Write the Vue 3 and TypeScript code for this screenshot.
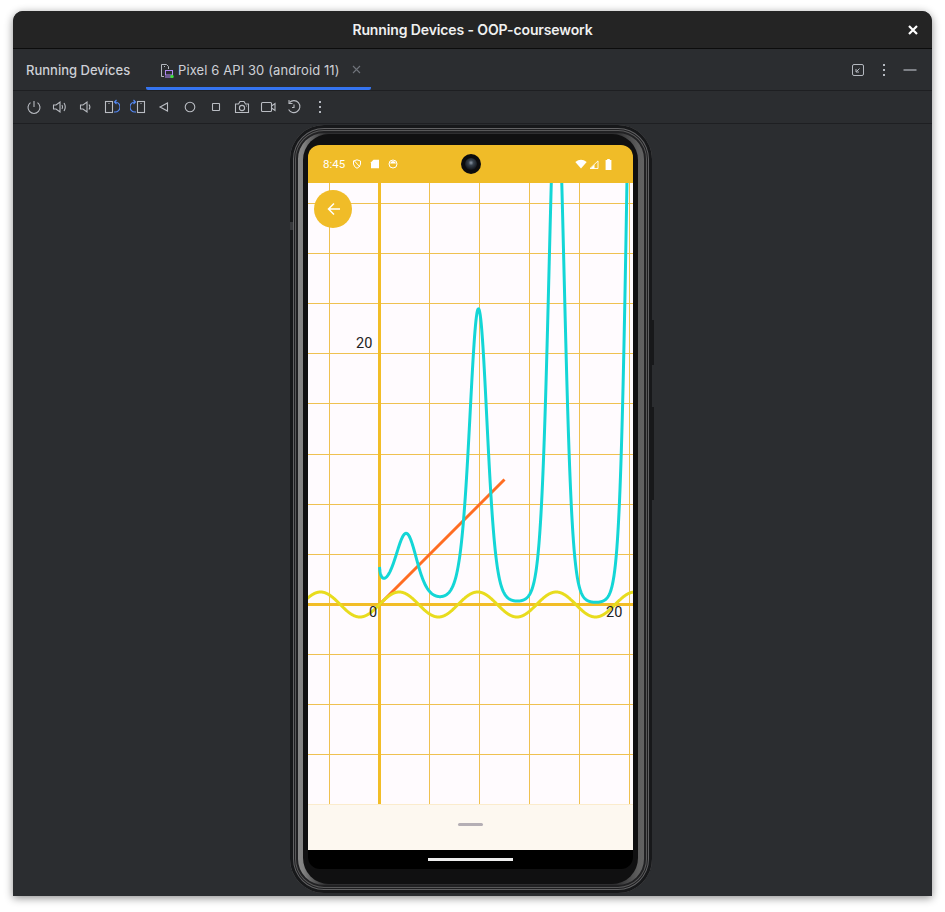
<script setup lang="ts">
const unit = 12.5
const ox = 71.5
const oy = 421.5
const W = 325
const H = 622

function path(f: (x: number) => number, from: number, to: number): string {
  const pts: string[] = []
  for (let x = from; x <= to; x += 0.02) {
    const y = Math.max(-400, oy - f(x) * unit)
    pts.push(`${(ox + x * unit).toFixed(2)},${y.toFixed(2)}`)
  }
  return 'M' + pts.join('L')
}

const cyan = path((x) => (x <= 0 ? 3 : 3 * Math.pow(x, Math.sin(x))), 0, 20.5)
const yellow = path((x) => Math.sin(x), -6, 21)
const orange = path((x) => x, 0, 10)

const vLines = [-1, 1, 2, 3, 4, 5].map((k) => ox + k * 50)
const hLines = [20, 70, 120, 170, 220, 271, 321, 371, 471, 521, 571].map((row) => row + 0.5)
</script>

<template>
  <div class="page">
    <div class="window">
      <header class="titlebar">
        <span class="title">Running Devices - OOP-coursework</span>
        <svg class="close" width="10" height="10" viewBox="0 0 10 10">
          <path d="M1 1L9 9M9 1L1 9" stroke="#fff" stroke-width="2.2" />
        </svg>
      </header>

      <div class="tabbar">
        <span class="tool-title">Running Devices</span>
        <div class="tab">
          <svg width="16" height="16" viewBox="0 0 16 16" fill="none">
            <path d="M5 14.5H2.5V2.5H7.5L9.5 4.5V7" stroke="#b4b8bf" />
            <path d="M5 4.5H6" stroke="#b4b8bf" />
            <rect x="6.5" y="8.5" width="7" height="4.5" stroke="#b189f5" />
            <path d="M6 15H12" stroke="#b189f5" />
            <circle cx="13" cy="14.5" r="1.7" fill="#3fdc3f" />
          </svg>
          <span class="tab-label">Pixel 6 API 30 (android 11)</span>
          <svg class="tab-x" width="9" height="9" viewBox="0 0 9 9">
            <path d="M1 1L8 8M8 1L1 8" stroke="#6f737a" stroke-width="1.1" />
          </svg>
        </div>
        <div class="tab-actions">
          <svg width="16" height="16" viewBox="0 0 16 16" fill="none">
            <rect x="2.5" y="2.5" width="11" height="11" rx="1.5" stroke="#b4b8bf" />
            <path d="M9.5 6.5L6 10M6 7V10H9" stroke="#b4b8bf" />
          </svg>
          <svg width="16" height="16" viewBox="0 0 16 16" fill="#b4b8bf">
            <rect x="7" y="2" width="2" height="2" />
            <rect x="7" y="7" width="2" height="2" />
            <rect x="7" y="12" width="2" height="2" />
          </svg>
          <svg width="16" height="16" viewBox="0 0 16 16">
            <path d="M1.5 8H14.5" stroke="#9a9da3" stroke-width="1.4" />
          </svg>
        </div>
      </div>

      <div class="toolbar">
        <svg class="ti" viewBox="0 0 16 16"><path d="M8 2V8" /><path d="M4.5 3.6A6 6 0 1 0 11.5 3.6" /></svg>
        <svg class="ti" viewBox="0 0 16 16"><path d="M1.5 6H4L8 3V13L4 10H1.5Z" /><path d="M10 6Q11.2 8 10 10M12 4Q14.5 8 12 12" /></svg>
        <svg class="ti" viewBox="0 0 16 16"><path d="M2.5 6H5L9 3V13L5 10H2.5Z" /><path d="M11 5.5Q12.8 8 11 10.5" /></svg>
        <svg class="ti" viewBox="0 0 16 16"><rect x="1.5" y="2.5" width="7" height="11" /><path d="M4.5 4.5H5.5" /><path class="blue" d="M10 3H11A5 5 0 0 1 11 13H10M12.5 1L10.5 3L12.5 5" /></svg>
        <svg class="ti" viewBox="0 0 16 16"><rect x="7.5" y="2.5" width="7" height="11" /><path d="M10.5 4.5H11.5" /><path class="blue" d="M6 3H5A5 5 0 0 0 5 13H6M3.5 1L5.5 3L3.5 5" /></svg>
        <svg class="ti" viewBox="0 0 16 16"><path d="M4 8L11.5 4V12Z" /></svg>
        <svg class="ti" viewBox="0 0 16 16"><circle cx="8" cy="8" r="4.8" /></svg>
        <svg class="ti" viewBox="0 0 16 16"><rect x="4.5" y="4.5" width="7" height="7" rx=".5" /></svg>
        <svg class="ti" viewBox="0 0 16 16"><path d="M1.5 13.5V5H4.5L6 2.5H10L11.5 5H14.5V13.5Z" /><circle cx="8" cy="9" r="2.6" /><path d="M12 7H12.8" /></svg>
        <svg class="ti" viewBox="0 0 16 16"><rect x="1.5" y="3.5" width="10" height="9" rx="1" /><path d="M11.5 7L15 4.5V11.5L11.5 9" /></svg>
        <svg class="ti" viewBox="0 0 16 16"><path d="M3.5 3.5A6 6 0 1 1 2.6 10.5" /><path d="M3 1V4.5H6.5" /><path d="M8 5.5V8.5H6" /></svg>
        <svg class="ti dots" viewBox="0 0 16 16"><rect x="7" y="2" width="2" height="2" /><rect x="7" y="7" width="2" height="2" /><rect x="7" y="12" width="2" height="2" /></svg>
      </div>

      <main class="stage">
        <div class="device">
          <span class="side side-a"></span>
          <span class="side side-b"></span>
          <span class="side side-c"></span>
          <div class="device-body">
            <div class="screen">
              <div class="statusbar">
                <div class="status-left">
                  <span class="clock">8:45</span>
                  <svg width="10" height="10" viewBox="0 0 10 10" fill="none"><path d="M1.5 2L5 .8L8.5 2V5Q8 8 5 9.3Q2 8 1.5 5Z" stroke="#fff" /><path d="M2 1.5L8 8" stroke="#fff" /></svg>
                  <svg width="10" height="10" viewBox="0 0 10 10"><path d="M3.5 .8H9V9.2H1V3.3Z" fill="#fff" /></svg>
                  <svg width="10" height="10" viewBox="0 0 10 10" fill="none"><circle cx="5" cy="5" r="4" stroke="#fff" /><path d="M2 4.5Q2.5 2 5 2Q7.5 2 8 4.5Z" fill="#fff" /></svg>
                </div>
                <div class="camera"><span class="lens"></span></div>
                <div class="status-right">
                  <svg width="12" height="10" viewBox="0 0 12 10"><path d="M.3 3Q6 -1.5 11.7 3L6 9.5Z" fill="#fff" /></svg>
                  <svg width="10" height="9" viewBox="0 0 10 9" fill="none"><path d="M9 .9V8.5H1Z" stroke="#fff" stroke-width=".9" /><path d="M5.5 4.5V8.5H1.5Z" fill="#fff" /></svg>
                  <svg width="7" height="11" viewBox="0 0 7 11"><path d="M2.2 0H4.8V1H6.4V11H.6V1H2.2Z" fill="#fff" /></svg>
                </div>
              </div>

              <div class="plot">
                <svg class="chart" :width="W" :height="H" :viewBox="`0 0 ${W} ${H}`">
                  <line v-for="x in vLines" :key="'v' + x" :x1="x" :x2="x" y1="0" :y2="H" class="grid" />
                  <line v-for="y in hLines" :key="'h' + y" x1="0" :x2="W" :y1="y" :y2="y" class="grid" />
                  <line :x1="ox" :x2="ox" y1="0" :y2="H" class="axis" />
                  <line x1="0" :x2="W" :y1="oy" :y2="oy" class="axis" />
                  <path :d="orange" class="curve orange" />
                  <path :d="cyan" class="curve cyan" />
                  <path :d="yellow" class="curve yellow" />
                  <text x="48" y="165" class="lbl">20</text>
                  <text x="61" y="434" class="lbl">0</text>
                  <text x="298" y="434" class="lbl">20</text>
                </svg>
                <button class="fab" type="button">
                  <svg width="16" height="16" viewBox="-1 0 16 16" fill="none"><path d="M14 8H2.5M8 2.5L2.5 8L8 13.5" stroke="#fff" stroke-width="1.5" /></svg>
                </button>
              </div>

              <div class="sheet"><span class="handle"></span></div>
              <div class="navbar"><span class="home"></span></div>
            </div>
          </div>
        </div>
      </main>
    </div>
  </div>
</template>

<style>
html, body { margin: 0; background: #fff; }
</style>

<style scoped>
.page {
  width: 945px;
  height: 912px;
  padding: 11px 13px 16px;
  box-sizing: border-box;
  background: #fff;
  overflow: hidden;
  font-family: Inter, "Liberation Sans", sans-serif;
}
.window {
  height: 885px;
  display: flex;
  flex-direction: column;
  border-radius: 10px 10px 0 0;
  overflow: hidden;
  background: #2b2d30;
  box-shadow: 0 2px 9px rgba(0, 0, 0, .45);
}
.titlebar {
  height: 37px;
  flex: none;
  display: flex;
  align-items: center;
  justify-content: center;
  position: relative;
  background: #242424;
  border-bottom: 1px solid #0c0c0c;
}
.title {
  color: #f0f0f0;
  font-size: 14px;
  font-weight: 600;
  letter-spacing: -.12px;
}
.close { position: absolute; right: 14px; top: 14px; }
.tabbar {
  height: 41px;
  flex: none;
  display: flex;
  align-items: stretch;
  padding: 0 14px 0 13px;
  border-bottom: 1px solid #1e1f22;
}
.tool-title {
  align-self: center;
  color: #ced0d6;
  font-size: 13px;
  font-weight: 500;
  width: 118px;
  white-space: nowrap;
}
.tab {
  width: 225px;
  box-sizing: border-box;
  display: flex;
  align-items: center;
  padding-left: 13px;
  gap: 3px;
  margin-left: 2px;
  border-bottom: 3px solid #3574f0;
  border-radius: 0 0 2px 2px;
  padding-top: 3px;
}
.tab-label {
  color: #ced0d6;
  font-size: 13px;
  letter-spacing: .1px;
  white-space: nowrap;
  width: 163px;
}
.tab-x { margin-left: 8px; }
.tab-actions {
  margin-left: auto;
  display: flex;
  align-items: center;
  gap: 10px;
}
.toolbar {
  height: 32px;
  flex: none;
  display: flex;
  align-items: center;
  gap: 10px;
  padding-left: 13px;
  border-bottom: 1px solid #1e1f22;
}
.ti {
  width: 16px;
  height: 16px;
  flex: none;
  fill: none;
  stroke: #b9bcc2;
  stroke-width: 1.1;
}
.ti .blue { stroke: #548af7; }
.dots { fill: #b4b8bf; stroke: none; }
.stage {
  flex: 1;
  display: flex;
  justify-content: flex-start;
  align-items: flex-start;
  padding: 1px 0 0 277px;
  min-height: 0;
}
.device {
  width: 362px;
  height: 768px;
  flex: none;
  position: relative;
  box-sizing: border-box;
  padding: 9px 14px 9px 13px;
  border-radius: 34px;
  background: linear-gradient(90deg, #8e8e8e 0, #828282 13px, #2e2e30 36px, #2e2e30 calc(100% - 36px), #5e5e5e calc(100% - 14px), #686868 100%);
  box-shadow:
    inset 0 0 0 3px #17181a,
    inset 0 0 0 4px #626264,
    inset 0 0 0 5px #1e1e20,
    inset 0 0 0 6px #585859,
    inset 0 0 0 8px #212123;
}
.side {
  position: absolute;
  background: #17181a;
}
.side-a { right: -2px; top: 195px; width: 2px; height: 45px; }
.side-b { right: -2px; top: 282px; width: 2px; height: 93px; }
.side-c { left: 0; top: 97px; width: 3px; height: 8px; background: #38393c; }
.device-body {
  height: 100%;
  box-sizing: border-box;
  padding: 11px 5px 15px;
  border-radius: 26px;
  background: #101011;
}
.screen {
  width: 325px;
  height: 724px;
  display: flex;
  flex-direction: column;
  overflow: hidden;
  border-radius: 12px;
  background: #000;
}
.statusbar {
  height: 38px;
  flex: none;
  display: flex;
  align-items: center;
  justify-content: space-between;
  padding: 0 21px 0 15px;
  position: relative;
  background: #f0bc28;
}
.status-left { display: flex; align-items: center; gap: 8px; }
.clock {
  font-family: Roboto, sans-serif;
  font-size: 11.5px;
  color: #fff;
  margin-right: -1px;
}
.status-right { display: flex; align-items: center; gap: 2px; }
.status-right svg:last-child { margin-left: 4px; }
.camera {
  position: absolute;
  left: 153px;
  top: 9px;
  width: 20px;
  height: 20px;
  border-radius: 50%;
  background: #0c0c0e;
}
.lens {
  position: absolute;
  left: 4px;
  top: 4px;
  width: 12px;
  height: 12px;
  border-radius: 50%;
  background: radial-gradient(circle at 50% 40%, #8d99a8 0, #37414c 28%, #111318 75%);
}
.plot {
  height: 622px;
  flex: none;
  position: relative;
  background: #fffbfe;
  overflow: hidden;
}
.chart { display: block; }
.grid { stroke: #efc150; stroke-width: 1; }
.axis { stroke: #f2bd27; stroke-width: 3; }
.curve { fill: none; stroke-width: 3; stroke-linejoin: round; }
.cyan { stroke: #14d6d6; }
.orange { stroke: #ff6d22; }
.yellow { stroke: #e8dc1e; }
.lbl {
  font-family: Roboto, sans-serif;
  font-size: 14.5px;
  fill: #222;
}
.fab {
  position: absolute;
  left: 6px;
  top: 7px;
  width: 38px;
  height: 38px;
  padding: 0;
  border: 0;
  border-radius: 50%;
  display: flex;
  align-items: center;
  justify-content: center;
  background: #f0bc28;
}
.sheet {
  height: 45px;
  flex: none;
  box-sizing: border-box;
  padding-top: 18px;
  display: flex;
  justify-content: center;
  background: #fdf8f0;
  box-shadow: 0 -1px 0 #fbeccd;
  position: relative;
}
.handle {
  width: 25px;
  height: 3px;
  border-radius: 2px;
  background: #b5afb5;
}
.navbar {
  flex: 1;
  display: flex;
  justify-content: center;
  padding-top: 8px;
}
.home {
  width: 85px;
  height: 3px;
  background: #eee;
}
</style>
